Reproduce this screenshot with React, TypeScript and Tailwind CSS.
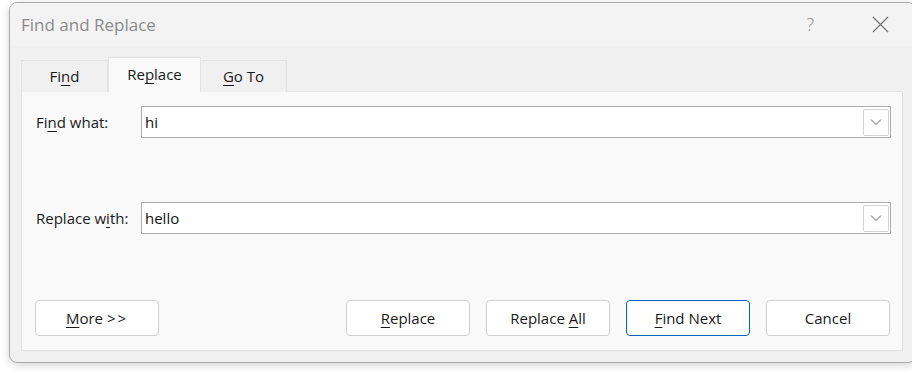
import React from "react";

function Key({ children }: { children: React.ReactNode }) {
  return <span className="underline underline-offset-[3px] decoration-1">{children}</span>;
}

function Chevron() {
  return (
    <svg width="12" height="8" viewBox="0 0 12 8" fill="none">
      <path d="M1 1.5 L6 6.5 L11 1.5" stroke="#5f5f5f" strokeWidth="1" />
    </svg>
  );
}

function Combo({ value }: { value: string }) {
  return (
    <div className="flex-1 h-[32px] bg-white border border-[#acacac] flex items-center pl-[3px] pr-[1px]">
      <span className="flex-1 text-[15px] text-[#111]">{value}</span>
      <div className="w-[26px] h-[27px] border border-[#d4d4d4] rounded-[2px] bg-white flex items-center justify-center">
        <Chevron />
      </div>
    </div>
  );
}

function Btn({ children, primary }: { children: React.ReactNode; primary?: boolean }) {
  return (
    <div
      className={`w-[124px] h-[36px] rounded-[4px] bg-white flex items-center justify-center text-[15px] text-[#1a1a1a] border ${
        primary ? "border-[#0067c0]" : "border-[#d0d0d0]"
      }`}
    >
      <span>{children}</span>
    </div>
  );
}

export default function App() {
  return (
    <div
      className="w-[912px] h-[373px] bg-white pt-[2px] pl-[9px] overflow-hidden"
      style={{ fontFamily: '"Open Sans", "Noto Sans", sans-serif' }}
    >
      <div className="w-[907px] h-[361px] rounded-[8px] border border-[#aaaaaa] bg-[#f0f0f0] shadow-[0_2px_8px_rgba(0,0,0,0.18)] flex flex-col overflow-hidden">
        {/* title bar */}
        <div className="h-[43px] bg-[#f3f3f3] flex items-center pl-[11px] pr-[26px] shrink-0">
          <span className="flex-1 text-[17px] text-[#8a8a8a]">Find and Replace</span>
          <span className="text-[18px] text-[#8a8a8a] font-light mr-[58px]">?</span>
          <svg width="17" height="17" viewBox="0 0 17 17">
            <path d="M1 1 L16 16 M16 1 L1 16" stroke="#6f6f6f" strokeWidth="1.1" />
          </svg>
        </div>

        {/* tabs */}
        <div className="flex items-end px-[11px] mt-[11px] shrink-0 relative z-10 -mb-[1px]">
          <div className="w-[87px] h-[32px] bg-[#f0f0f0] border border-b-0 border-[#e3e3e3] flex items-center justify-center text-[15px] text-[#1a1a1a]">
            <span>
              Fi<Key>n</Key>d
            </span>
          </div>
          <div className="w-[93px] h-[35px] bg-[#f9f9f9] border border-b-0 border-[#e3e3e3] flex items-center justify-center text-[15px] text-[#1a1a1a] pb-[1px]">
            <span>
              Re<Key>p</Key>lace
            </span>
          </div>
          <div className="w-[86px] h-[32px] bg-[#f0f0f0] border border-b-0 border-l-0 border-[#e3e3e3] flex items-center justify-center text-[15px] text-[#1a1a1a]">
            <span>
              <Key>G</Key>o To
            </span>
          </div>
        </div>

        {/* panel */}
        <div className="ml-[11px] mr-[12px] mb-[11px] flex-1 bg-[#f9f9f9] border border-[#e3e3e3] flex flex-col pl-[14px] pr-[11px] pt-[14px] pb-[14px]">
          <div className="flex items-center">
            <span className="w-[105px] text-[15px] text-[#1a1a1a]">
              Fi<Key>n</Key>d what:
            </span>
            <Combo value="hi" />
          </div>
          <div className="flex items-center mt-[64px]">
            <span className="w-[105px] text-[15px] text-[#1a1a1a]">
              Replace w<Key>i</Key>th:
            </span>
            <Combo value="hello" />
          </div>
          <div className="flex items-center mt-auto -ml-[1px] pr-[1px]">
            <Btn>
              <Key>M</Key>ore <span className="tracking-[2px]">&gt;&gt;</span>
            </Btn>
            <div className="flex-1" />
            <div className="flex gap-[16px]">
              <Btn>
                <Key>R</Key>eplace
              </Btn>
              <Btn>
                Replace <Key>A</Key>ll
              </Btn>
              <Btn primary>
                <Key>F</Key>ind Next
              </Btn>
              <Btn>Cancel</Btn>
            </div>
          </div>
        </div>
      </div>
    </div>
  );
}
